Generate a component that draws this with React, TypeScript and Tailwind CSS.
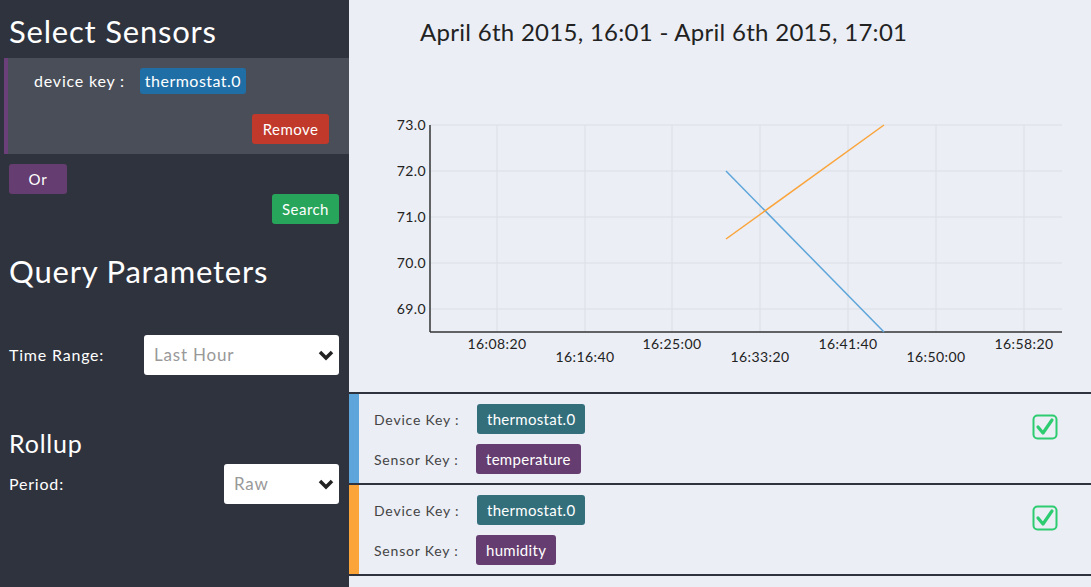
import React from 'react'

const font = { fontFamily: 'Lato, "Open Sans", sans-serif' }

function Chevron() {
  return (
    <svg width="16" height="12" viewBox="0 0 16 12">
      <polyline points="2,3 8,9 14,3" fill="none" stroke="#222" strokeWidth="3.5" strokeLinejoin="miter" />
    </svg>
  )
}

function CheckBox() {
  return (
    <svg width="26" height="26" viewBox="0 0 26 26">
      <rect x="1.5" y="1.5" width="23" height="23" rx="4" fill="none" stroke="#2ecc71" strokeWidth="2" />
      <polyline points="6,13 11,19 20,6" fill="none" stroke="#2ecc71" strokeWidth="3.2" strokeLinecap="round" strokeLinejoin="round" />
    </svg>
  )
}

function Chart() {
  const yTicks = [
    { v: '73.0', y: 55 },
    { v: '72.0', y: 101 },
    { v: '71.0', y: 147 },
    { v: '70.0', y: 193 },
    { v: '69.0', y: 239 },
  ]
  const xTicks = ['16:08:20', '16:16:40', '16:25:00', '16:33:20', '16:41:40', '16:50:00', '16:58:20']
  const xs = [148, 236, 323, 411, 499, 587, 675]
  const label = { ...font, letterSpacing: '0.03em' }
  return (
    <svg width="742" height="322" viewBox="0 0 742 322" className="block">
      {yTicks.map((t) => (
        <g key={t.v}>
          <line x1="81" x2="713" y1={t.y} y2={t.y} stroke="#dcdfe6" strokeWidth="1" />
          <text x="77" y={t.y + 5} textAnchor="end" fontSize="14" fill="#222" style={label}>{t.v}</text>
        </g>
      ))}
      {xs.map((x, i) => (
        <g key={x}>
          <line x1={x} x2={x} y1="55" y2="262" stroke="#dcdfe6" strokeWidth="1" />
          <text x={x} y={i % 2 === 0 ? 279 : 292} textAnchor="middle" fontSize="14" fill="#222" style={label}>{xTicks[i]}</text>
        </g>
      ))}
      <line x1="81" x2="81" y1="55" y2="262" stroke="#333" strokeWidth="1.5" />
      <line x1="81" x2="713" y1="262" y2="262" stroke="#333" strokeWidth="1.5" />
      <line x1="377" y1="101" x2="535" y2="262" stroke="#5da5da" strokeWidth="1.5" />
      <line x1="377" y1="169" x2="535" y2="55" stroke="#faa43a" strokeWidth="1.5" />
    </svg>
  )
}

function SensorRow({ stripe, sensor }: { stripe: string; sensor: string }) {
  return (
    <div className="flex h-[91px] border-b-2 border-[#2f333e]">
      <div className={`w-[10px] ${stripe}`} />
      <div className="flex flex-1 items-start justify-between pl-[15px] pr-[33px] pt-[10px] tracking-[0.05em]">
        <div className="flex flex-col gap-[10px]">
          <div className="flex items-center">
            <span className="w-[103px] text-[14px] text-[#444]">Device Key :</span>
            <span className="flex h-[30px] items-center rounded-[3px] bg-[#336e7b] px-[10px] text-[15px] tracking-[0.02em] text-white">thermostat.0</span>
          </div>
          <div className="flex items-center">
            <span className="w-[102px] text-[14px] text-[#444]">Sensor Key :</span>
            <span className="flex h-[30px] items-center rounded-[3px] bg-[#663d70] px-[10px] text-[15px] tracking-[0.02em] text-white">{sensor}</span>
          </div>
        </div>
        <div className="pt-[10px]">
          <CheckBox />
        </div>
      </div>
    </div>
  )
}

export default function App() {
  return (
    <div className="flex h-[587px] w-full overflow-hidden" style={font}>
      <div className="flex w-[349px] flex-col bg-[#2f333e] tracking-[0.05em] text-white">
        <h1 className="px-[9px] pt-[12px] text-[31px] leading-[38px]">Select Sensors</h1>
        <div className="ml-[4px] mt-[8px] h-[96px] border-l-[4px] border-[#6b3f7a] bg-[#4a4e58] pr-[20px]">
          <div className="flex items-center pl-[26px] pt-[10px]">
            <span className="text-[16px]">device key :</span>
            <span className="ml-[15px] rounded-[3px] bg-[#1f6ea5] px-[5px] py-[2px] text-[16px] leading-[22px] tracking-[0.03em]">thermostat.0</span>
          </div>
          <div className="mt-[20px] flex justify-end">
            <button className="h-[30px] w-[77px] rounded-[3px] bg-[#c0392b] text-[15px] tracking-[0.03em] text-white">Remove</button>
          </div>
        </div>
        <div className="px-[9px] pt-[10px]">
          <button className="h-[30px] w-[58px] rounded-[3px] bg-[#663d70] text-[15px] text-white">Or</button>
        </div>
        <div className="flex justify-end pr-[10px]">
          <button className="h-[30px] w-[67px] rounded-[3px] bg-[#27a55a] text-[15px] tracking-[0.03em] text-white">Search</button>
        </div>
        <h2 className="px-[9px] pt-[28px] text-[31px] leading-[38px]">Query Parameters</h2>
        <div className="mt-[45px] flex items-center justify-between pl-[9px] pr-[10px]">
          <span className="text-[16px]">Time Range:</span>
          <div className="flex h-[40px] w-[195px] items-center justify-between rounded-[3px] bg-white pl-[10px] pr-[5px]">
            <span className="text-[17px] text-[#999]">Last Hour</span>
            <Chevron />
          </div>
        </div>
        <h3 className="px-[9px] pt-[53px] text-[25px] leading-[30px]">Rollup</h3>
        <div className="mt-[6px] flex items-center justify-between pl-[9px] pr-[10px]">
          <span className="text-[16px]">Period:</span>
          <div className="flex h-[40px] w-[115px] items-center justify-between rounded-[3px] bg-white pl-[10px] pr-[5px]">
            <span className="text-[17px] text-[#999]">Raw</span>
            <Chevron />
          </div>
        </div>
      </div>
      <div className="flex flex-1 flex-col bg-[#ebeef5]">
        <div className="h-[70px] pl-[71px] pt-[16px] text-[24px] leading-[32px] tracking-[0.012em] text-[#222]">
          April 6th 2015, 16:01 - April 6th 2015, 17:01
        </div>
        <Chart />
        <div className="border-t-2 border-[#2f333e]">
          <SensorRow stripe="bg-[#5da5da]" sensor="temperature" />
          <SensorRow stripe="bg-[#faa43a]" sensor="humidity" />
        </div>
      </div>
    </div>
  )
}
